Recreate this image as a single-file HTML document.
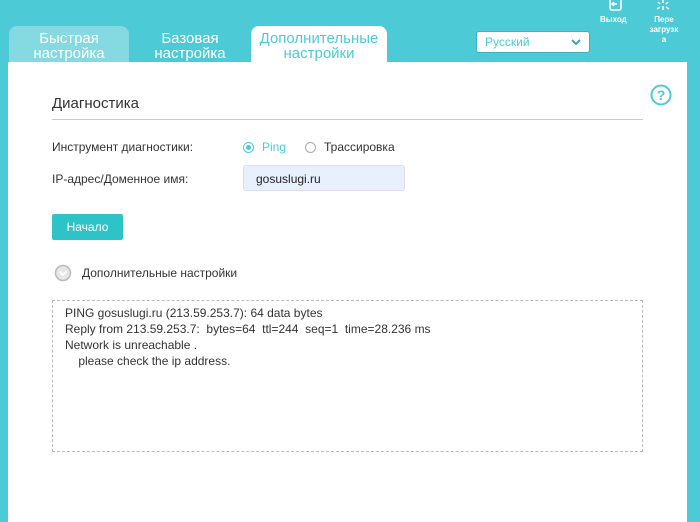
<!DOCTYPE html>
<html><head><meta charset="utf-8"><style>
body{margin:0;width:700px;height:514px;background:#4ccbd6;font-family:"Liberation Sans","DejaVu Sans",sans-serif;position:relative;overflow:hidden}
.a{position:absolute}
.tab{position:absolute;top:26px;height:36px;text-align:center;color:#fff;font-size:15px;line-height:15px;padding-top:5px;box-sizing:border-box;border-radius:8px 8px 0 0}
.panel{left:8px;top:62px;width:679px;height:460px;background:#fff}
.lbl{font-size:12px;color:#333}
.rad{width:9px;height:9px;border:1px solid #aaa;border-radius:50%}
</style></head><body>
<div class="tab" style="left:9px;width:120px;background:#85d9e0">Быстрая<br>настройка</div>
<div class="tab" style="left:132px;width:116px">Базовая<br>настройка</div>
<div class="tab" style="left:251px;width:136px;background:#fff;color:#4ccbd6">Дополнительные<br>настройки</div>
<div class="a" style="left:476px;top:31px;width:114px;height:22px;background:#fff;border:1px solid #3fb2bd;border-radius:3px;font-size:12px;color:#4ccbd6;line-height:20px;box-sizing:border-box;padding-left:8px">Русский<svg style="position:absolute;right:8px;top:7px" width="10" height="7"><path d="M1 1L5 5L9 1" stroke="#3fa9b3" stroke-width="2" fill="none"/></svg></div>
<svg class="a" style="left:607px;top:0" width="18" height="12"><rect x="3" y="-2" width="11" height="12" rx="2" fill="none" stroke="#fff" stroke-width="1.6"/><path d="M10 4H5M7 2L5 4L7 6" stroke="#fff" stroke-width="1.5" fill="none"/></svg>
<div class="a" style="left:600px;top:15px;font-size:8px;color:#fff;font-weight:bold">Выход</div>
<svg class="a" style="left:654px;top:0" width="18" height="12" stroke="#fff" stroke-width="1.5"><path d="M9 0V3M4 2L6 4M14 2L12 4M9 6V10M3 9L6 7M15 9L12 7"/></svg>
<div class="a" style="left:648px;top:15px;width:32px;text-align:center;font-size:8px;line-height:10px;color:#fff;font-weight:bold">Пере<br>загрузк<br>а</div>
<div class="a panel"></div>
<div class="a" style="left:52px;top:95px;font-size:15px;color:#333">Диагностика</div>
<div class="a" style="left:52px;top:119px;width:591px;border-top:1px solid #ccc"></div>
<svg class="a" style="left:650px;top:84px" width="22" height="22"><circle cx="11" cy="11" r="9.5" fill="none" stroke="#4ccbd6" stroke-width="2"/><text x="11" y="16" text-anchor="middle" font-size="14" font-weight="bold" fill="#4ccbd6" font-family="Liberation Sans">?</text></svg>
<div class="a lbl" style="left:52px;top:140px">Инструмент диагностики:</div>
<div class="a rad" style="left:243px;top:142px;border-color:#4ccbd6"><div style="margin:2px;width:5px;height:5px;border-radius:50%;background:#4ccbd6"></div></div>
<div class="a lbl" style="left:262px;top:140px;color:#4ccbd6">Ping</div>
<div class="a rad" style="left:305px;top:142px"></div>
<div class="a lbl" style="left:324px;top:140px">Трассировка</div>
<div class="a lbl" style="left:52px;top:172px">IP-адрес/Доменное имя:</div>
<div class="a" style="left:243px;top:165px;width:162px;height:26px;background:#e8f0fe;border:1px solid #dde;border-radius:3px;box-sizing:border-box;font-size:12px;color:#222;padding:6px 0 0 12px">gosuslugi.ru</div>
<div class="a" style="left:52px;top:214px;width:71px;height:26px;background:#2ec4c7;border-radius:2px;color:#fff;font-size:12px;text-align:center;line-height:26px">Начало</div>
<svg class="a" style="left:54px;top:264px" width="18" height="18"><circle cx="9" cy="9" r="7.5" fill="#e6e6e6" stroke="#bbb" stroke-width="1.5"/><path d="M5.5 7.5L9 11L12.5 7.5" stroke="#fff" stroke-width="2" fill="none"/></svg>
<div class="a lbl" style="left:82px;top:266px">Дополнительные настройки</div>
<div class="a" style="left:52px;top:300px;width:591px;height:152px;border:1px dashed #bbb;box-sizing:border-box"></div>
<div class="a" style="left:65px;top:305px;font-size:12px;line-height:16px;color:#333">PING gosuslugi.ru (213.59.253.7): 64 data bytes<br>Reply from 213.59.253.7:&nbsp; bytes=64&nbsp; ttl=244&nbsp; seq=1&nbsp; time=28.236 ms<br>Network is unreachable .<br>&nbsp;&nbsp;&nbsp; please check the ip address.</div>
</body></html>
